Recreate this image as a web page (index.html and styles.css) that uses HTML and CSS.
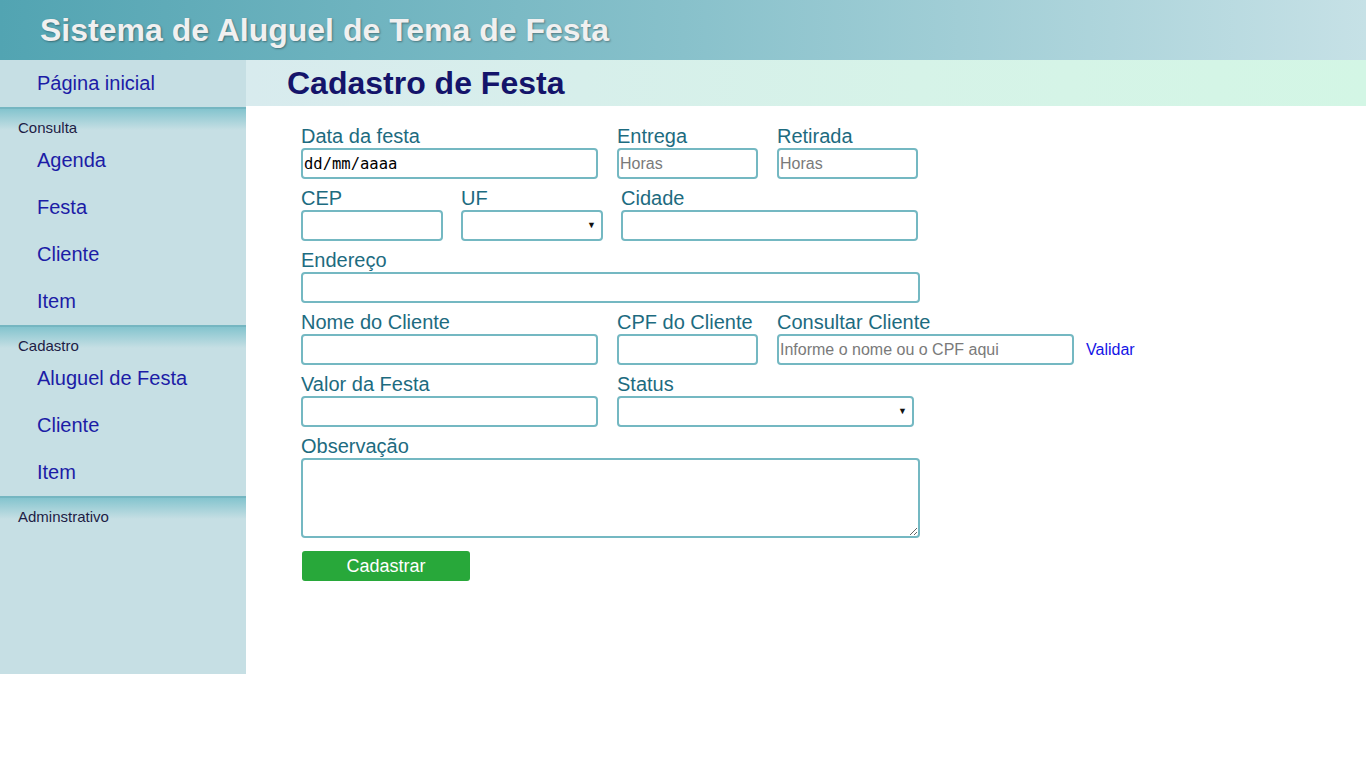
FILE: index.html
```html
<!DOCTYPE html>
<html lang="pt-BR">
<head>
<meta charset="utf-8">
<title>Cadastro de Festa</title>
<link rel="stylesheet" href="styles.css">
</head>
<body>
<header class="topbar">
  <h1 class="app-title">Sistema de Aluguel de Tema de Festa</h1>
</header>
<div class="layout">
  <aside class="sidebar">
    <a class="nav-link home" href="#">Página inicial</a>
    <div class="nav-section">
      <div class="nav-heading">Consulta</div>
      <a class="nav-link" href="#">Agenda</a>
      <a class="nav-link" href="#">Festa</a>
      <a class="nav-link" href="#">Cliente</a>
      <a class="nav-link" href="#">Item</a>
    </div>
    <div class="nav-section">
      <div class="nav-heading">Cadastro</div>
      <a class="nav-link" href="#">Aluguel de Festa</a>
      <a class="nav-link" href="#">Cliente</a>
      <a class="nav-link" href="#">Item</a>
    </div>
    <div class="nav-section">
      <div class="nav-heading">Adminstrativo</div>
    </div>
  </aside>
  <main class="content">
    <div class="page-title"><h2>Cadastro de Festa</h2></div>
    <form class="form">
      <div class="row">
        <div class="field w-lg"><label>Data da festa</label><input class="input mono" type="text" value="dd/mm/aaaa"></div>
        <div class="field w-sm"><label>Entrega</label><input class="input" type="text" placeholder="Horas"></div>
        <div class="field w-sm"><label>Retirada</label><input class="input" type="text" placeholder="Horas"></div>
      </div>
      <div class="row gap18">
        <div class="field w-sm2"><label>CEP</label><input class="input" type="text"></div>
        <div class="field w-sm2"><label>UF</label><div class="select-wrap"><select class="input select"><option></option></select><span class="arrow">▼</span></div></div>
        <div class="field w-lg"><label>Cidade</label><input class="input" type="text"></div>
      </div>
      <div class="row">
        <div class="field w-full"><label>Endereço</label><input class="input" type="text"></div>
      </div>
      <div class="row">
        <div class="field w-lg"><label>Nome do Cliente</label><input class="input" type="text"></div>
        <div class="field w-sm"><label>CPF do Cliente</label><input class="input" type="text"></div>
        <div class="field w-lg"><label>Consultar Cliente</label><input class="input" type="text" placeholder="Informe o nome ou o CPF aqui"></div>
        <a class="validate" href="#">Validar</a>
      </div>
      <div class="row">
        <div class="field w-lg"><label>Valor da Festa</label><input class="input" type="text"></div>
        <div class="field w-lg"><label>Status</label><div class="select-wrap"><select class="input select"><option></option></select><span class="arrow">▼</span></div></div>
      </div>
      <div class="row">
        <div class="field w-full"><label>Observação</label><textarea class="input textarea"></textarea></div>
      </div>
      <button class="submit" type="button">Cadastrar</button>
    </form>
  </main>
</div>
</body>
</html>
```
FILE: styles.css
```css
* { box-sizing: border-box; }
html, body { margin: 0; padding: 0; }
body {
  font-family: "Liberation Sans", Arial, sans-serif;
  background: #fff;
}
.topbar {
  height: 60px;
  background: linear-gradient(to right, #52a4b2 0%, #88c1cb 50%, #c6e1e6 100%);
  display: flex;
  align-items: center;
  padding-left: 40px;
}
.app-title {
  margin: 0;
  font-size: 32px;
  font-weight: bold;
  color: #f0f0f0;
  text-shadow: 1px 1px 2px rgba(0,0,0,0.35);
  line-height: 1;
}
.layout {
  display: flex;
  align-items: flex-start;
}
.sidebar {
  width: 246px;
  height: 614px;
  flex: none;
  background: #c6dfe4;
  display: flex;
  flex-direction: column;
}
.nav-link {
  display: flex;
  align-items: center;
  height: 47px;
  padding-left: 37px;
  font-size: 20px;
  color: #1c1ca6;
  text-decoration: none;
}
.nav-section {
  border-top: 2px solid #75b6c1;
}
.nav-heading {
  height: 28px;
  padding: 10px 0 0 18px;
  font-size: 15px;
  color: #1d1d45;
  line-height: 17px;
  background: linear-gradient(to bottom, #84c4ce 0%, #c6dfe4 75%);
}
.content {
  flex: 1;
}
.page-title {
  height: 46px;
  background: linear-gradient(to right, #d8ebee 0%, #d6f3e8 60%, #d3f6e5 100%);
  display: flex;
  align-items: center;
  padding-left: 41px;
}
.page-title h2 {
  margin: 0;
  font-size: 32px;
  font-weight: bold;
  color: #14146a;
  line-height: 1;
}
.form {
  padding: 18px 0 0 55px;
  display: flex;
  flex-direction: column;
  gap: 7px;
}
.row {
  display: flex;
  gap: 19px;
  align-items: flex-end;
}
.row.gap18 { gap: 18px; }
.field {
  display: flex;
  flex-direction: column;
}
.field label {
  font-size: 20px;
  line-height: 24px;
  color: #1d6b80;
}
.w-lg { width: 297px; }
.w-sm { width: 141px; }
.w-sm2 { width: 142px; }
.w-full { width: 619px; }
.input {
  height: 31px;
  width: 100%;
  border: 2px solid #74b8c2;
  border-radius: 4px;
  font-family: "Liberation Sans", Arial, sans-serif;
  font-size: 16px;
  padding: 0 1px;
  color: #000;
  background: #fff;
  outline: none;
}
.input::placeholder { color: #7a7a7a; }
.mono {
  font-family: "DejaVu Sans Mono", "Liberation Mono", monospace;
  font-size: 15.5px;
}
.select-wrap { position: relative; }
.select {
  appearance: none;
  -webkit-appearance: none;
}
.arrow {
  position: absolute;
  right: 7px;
  top: 10px;
  font-size: 9px;
  color: #111;
  pointer-events: none;
}
.textarea {
  height: 80px;
  resize: vertical;
  display: block;
}
.validate {
  font-size: 16px;
  color: #1515e6;
  text-decoration: none;
  margin-left: -7px;
  line-height: 31px;
}
.submit {
  margin: 6px 0 0 1px;
  width: 168px;
  height: 30px;
  background: #28a83a;
  color: #fff;
  border: none;
  border-radius: 3px;
  font-family: "Liberation Sans", Arial, sans-serif;
  font-size: 18px;
  cursor: pointer;
}
```
